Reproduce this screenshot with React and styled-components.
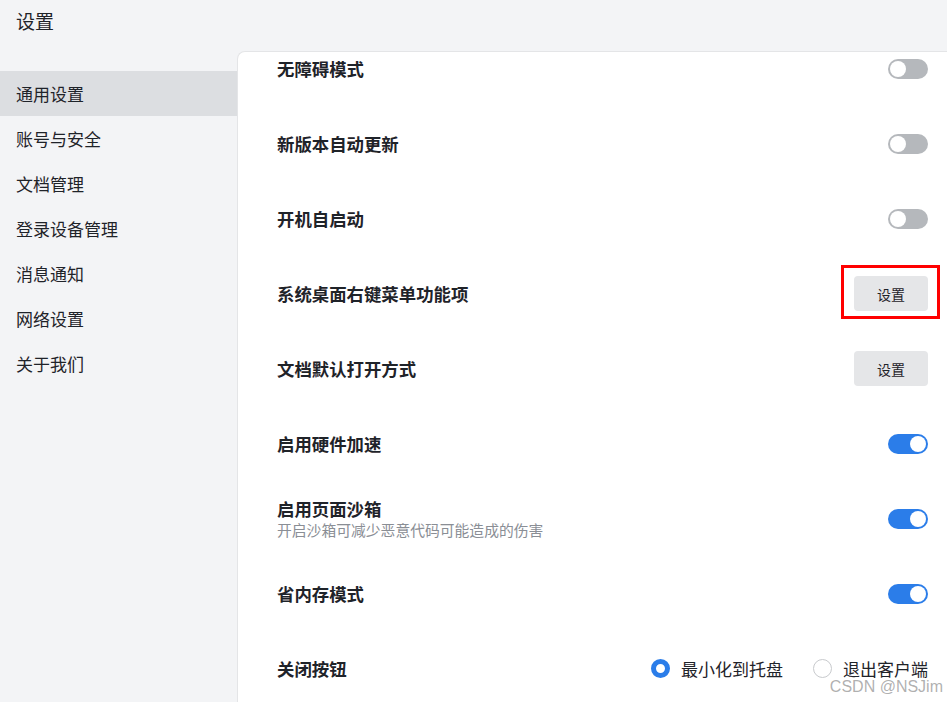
import React from "react";
import styled, { createGlobalStyle } from "styled-components";

const Global = createGlobalStyle`
  html, body { margin: 0; padding: 0; background: #f3f4f6; }
  body { font-family: "Noto Sans CJK SC", "Noto Sans", sans-serif; color: #1f2329; }
  * { box-sizing: border-box; }
`;

const Page = styled.div`
  width: 947px;
  height: 702px;
  overflow: hidden;
  position: relative;
  display: flex;
  flex-direction: column;
  background: #f3f4f6;
`;

const Header = styled.div`
  height: 51px;
  padding: 7px 0 0 16px;
  font-size: 19px;
  line-height: 28px;
  color: #1f2329;
`;

const Body = styled.div`
  flex: 1;
  display: flex;
  min-height: 0;
`;

const Sidebar = styled.nav`
  width: 237px;
  padding-top: 20px;
  display: flex;
  flex-direction: column;
`;

const NavItem = styled.div`
  height: 45px;
  padding-left: 16px;
  display: flex;
  align-items: center;
  font-size: 17px;
  color: #1f2329;
  background: ${(p) => (p.$active ? "#dcdee1" : "transparent")};
`;

const Panel = styled.div`
  flex: 1;
  background: #fff;
  border-top: 1px solid #e4e5e7;
  border-left: 1px solid #e4e5e7;
  border-top-left-radius: 8px;
  overflow: hidden;
`;

const List = styled.div`
  margin-top: -21px;
  padding: 0 19px 0 39px;
`;

const Row = styled.div`
  height: 75px;
  display: flex;
  align-items: center;
  justify-content: space-between;
`;

const Label = styled.div`
  display: flex;
  flex-direction: column;
`;

const Title = styled.div`
  font-size: 17.4px;
  font-weight: 700;
  line-height: 22px;
  color: #1f2329;
`;

const Sub = styled.div`
  font-size: 14.8px;
  line-height: 20px;
  color: #8a8e95;
`;

const Toggle = styled.div`
  width: 40px;
  height: 20px;
  border-radius: 10px;
  background: ${(p) => (p.$on ? "#2b7de9" : "#b5b8bc")};
  position: relative;
  &::after {
    content: "";
    position: absolute;
    top: 2px;
    left: ${(p) => (p.$on ? "22px" : "2px")};
    width: 16px;
    height: 16px;
    border-radius: 50%;
    background: #fff;
  }
`;

const Button = styled.div`
  width: 74px;
  height: 35px;
  border-radius: 4px;
  background: #e5e6e8;
  display: flex;
  align-items: center;
  justify-content: center;
  font-size: 14px;
  color: #1f2329;
`;

const BtnWrap = styled.div`
  position: relative;
`;

const Highlight = styled.div`
  position: absolute;
  left: -13px;
  top: -11px;
  width: 99px;
  height: 54px;
  border: 3px solid #ff0000;
`;

const Radios = styled.div`
  display: flex;
  align-items: center;
  gap: 30px;
`;

const RadioItem = styled.div`
  display: flex;
  align-items: center;
  gap: 11px;
  font-size: 17px;
  color: #1f2329;
`;

const RadioDot = styled.span`
  width: 19px;
  height: 19px;
  border-radius: 50%;
  box-sizing: border-box;
  border: ${(p) => (p.$checked ? "5.5px solid #2b7de9" : "1px solid #c8cacd")};
  background: #fff;
`;

const Watermark = styled.div`
  position: absolute;
  right: 4px;
  bottom: 6px;
  font-family: "Liberation Sans", Arial, sans-serif;
  font-size: 16px;
  color: rgba(150, 150, 150, 0.75);
`;

const nav = ["通用设置", "账号与安全", "文档管理", "登录设备管理", "消息通知", "网络设置", "关于我们"];

export default function App() {
  return (
    <Page>
      <Global />
      <Header>设置</Header>
      <Body>
        <Sidebar>
          {nav.map((n, i) => (
            <NavItem key={n} $active={i === 0}>{n}</NavItem>
          ))}
        </Sidebar>
        <Panel>
          <List>
            <Row><Title>无障碍模式</Title><Toggle /></Row>
            <Row><Title>新版本自动更新</Title><Toggle /></Row>
            <Row><Title>开机自启动</Title><Toggle /></Row>
            <Row>
              <Title>系统桌面右键菜单功能项</Title>
              <BtnWrap><Button>设置</Button><Highlight /></BtnWrap>
            </Row>
            <Row><Title>文档默认打开方式</Title><Button>设置</Button></Row>
            <Row><Title>启用硬件加速</Title><Toggle $on /></Row>
            <Row>
              <Label>
                <Title>启用页面沙箱</Title>
                <Sub>开启沙箱可减少恶意代码可能造成的伤害</Sub>
              </Label>
              <Toggle $on />
            </Row>
            <Row><Title>省内存模式</Title><Toggle $on /></Row>
            <Row>
              <Title>关闭按钮</Title>
              <Radios>
                <RadioItem><RadioDot $checked />最小化到托盘</RadioItem>
                <RadioItem><RadioDot />退出客户端</RadioItem>
              </Radios>
            </Row>
          </List>
        </Panel>
      </Body>
      <Watermark>CSDN @NSJim</Watermark>
    </Page>
  );
}
